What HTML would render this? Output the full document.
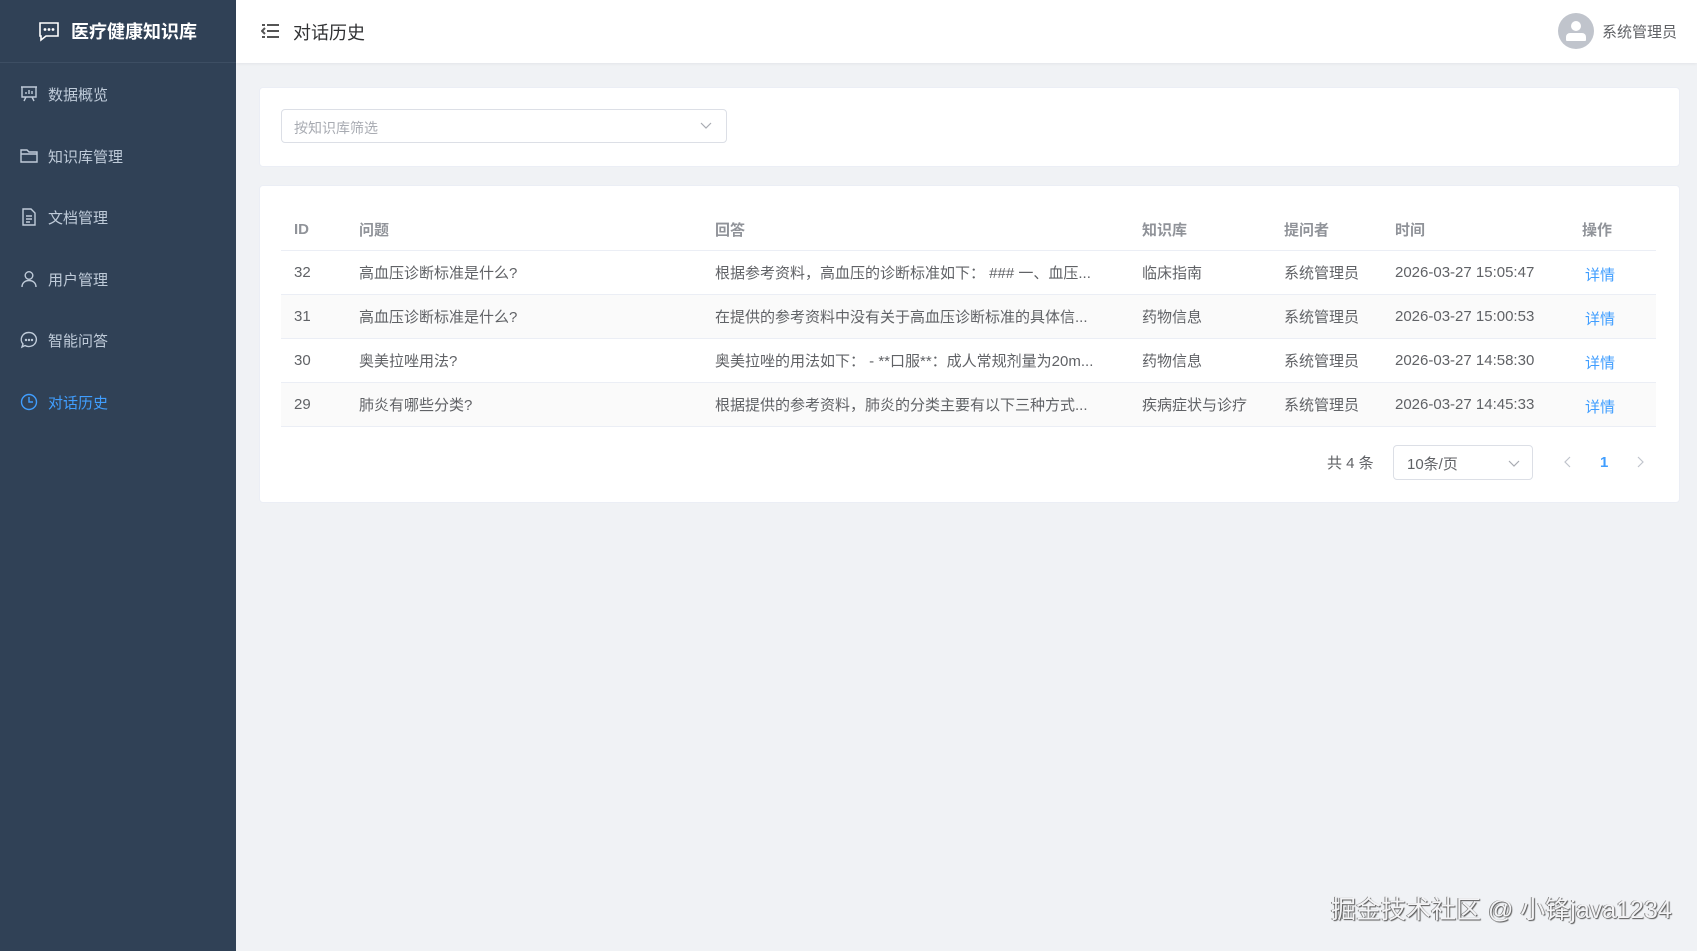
<!DOCTYPE html>
<html><head><meta charset="utf-8">
<style>
*{margin:0;padding:0;box-sizing:border-box}
body{width:1697px;height:951px;overflow:hidden;background:#f0f2f5;font-family:"Liberation Sans","Noto Sans CJK SC",sans-serif;position:relative;color:#606266}
.side{position:absolute;left:0;top:0;width:236px;height:951px;background:#304156}
.logo{height:63px;border-bottom:1px solid #3d4e63;display:flex;align-items:center;padding-left:38px;color:#fff;font-weight:bold;font-size:18px}
.logo svg{margin-right:11px}
.mi{position:absolute;left:0;width:236px;height:56px;display:flex;align-items:center;padding-left:20px;color:#bfcbd9;font-size:15px}
.mi svg{margin-right:10px}
.mi.act{color:#409eff}
.head{position:absolute;left:236px;top:0;right:0;height:63px;background:#fff;box-shadow:0 1px 3px rgba(0,21,41,.06)}
.a{position:absolute;white-space:nowrap}
.card{position:absolute;background:#fff;border:1px solid #ebeef5;border-radius:4px}
.t{position:absolute;font-size:15px;color:#606266;white-space:nowrap}
.n{margin-top:2px}
.th{position:absolute;font-size:15px;color:#909399;font-weight:bold;white-space:nowrap}
.row{position:absolute;left:281px;width:1375px;height:44px;border-bottom:1px solid #ebeef5}
.blue{color:#409eff}
</style></head><body>
<div class="side">
 <div class="logo"><svg width="22" height="22" viewBox="0 0 22 22" fill="none" stroke="#fff" stroke-width="1.6"><path d="M2 3h18v13H8l-5 4v-4H2z"/><circle cx="7" cy="9.5" r=".6" fill="#fff"/><circle cx="11" cy="9.5" r=".6" fill="#fff"/><circle cx="15" cy="9.5" r=".6" fill="#fff"/></svg>医疗健康知识库</div>
</div>
<div class="mi" style="top:66px"><svg width="18" height="18" viewBox="0 0 18 18" fill="none" stroke="#bfcbd9" stroke-width="1.4"><path d="M1 2h16M2 2v10h14V2M6 12l-2 4M12 12l2 4M6 9V7M9 9V5M12 9V6"/></svg>数据概览</div>
<div class="mi" style="top:128px"><svg width="18" height="18" viewBox="0 0 18 18" fill="none" stroke="#bfcbd9" stroke-width="1.4"><path d="M1 3h6l2 2h8v10H1z M1 7h16"/></svg>知识库管理</div>
<div class="mi" style="top:189px"><svg width="18" height="18" viewBox="0 0 18 18" fill="none" stroke="#bfcbd9" stroke-width="1.4"><path d="M3 1h8l4 4v12H3z M6 8h6M6 11h6M6 14h4"/></svg>文档管理</div>
<div class="mi" style="top:251px"><svg width="18" height="18" viewBox="0 0 18 18" fill="none" stroke="#bfcbd9" stroke-width="1.4"><circle cx="9" cy="5.5" r="3.8"/><path d="M2 17c0-4 3-6.5 7-6.5s7 2.5 7 6.5"/></svg>用户管理</div>
<div class="mi" style="top:312px"><svg width="18" height="18" viewBox="0 0 18 18" fill="none" stroke="#bfcbd9" stroke-width="1.4"><path d="M9 1.5a7.5 7 0 1 1-4 13l-3 1.5 1-3A7.5 7 0 0 1 9 1.5z"/><circle cx="6" cy="9" r=".5" fill="#bfcbd9"/><circle cx="9" cy="9" r=".5" fill="#bfcbd9"/><circle cx="12" cy="9" r=".5" fill="#bfcbd9"/></svg>智能问答</div>
<div class="mi act" style="top:374px"><svg width="18" height="18" viewBox="0 0 18 18" fill="none" stroke="#409eff" stroke-width="1.4"><circle cx="9" cy="9" r="7.5"/><path d="M9 4v5h4"/></svg>对话历史</div>

<div class="head">
 <svg class="a" style="left:25px;top:23px" width="18" height="16" viewBox="0 0 18 16" fill="none" stroke="#555" stroke-width="2"><path d="M6 2h12M6 8h12M6 14h12M1 2h3M1 14h3M4 5l-3 3 3 3"/></svg>
 <div class="a" style="left:57px;top:19px;font-size:18px;color:#303133">对话历史</div>
 <div class="a" style="left:1322px;top:13px;width:36px;height:36px;border-radius:50%;background:#c0c4cc;overflow:hidden">
  <div style="position:absolute;left:13px;top:8px;width:10px;height:10px;border-radius:50%;background:#fff"></div>
  <div style="position:absolute;left:8px;top:20px;width:20px;height:8px;border-radius:4px 4px 1px 1px;background:#fff"></div>
 </div>
 <div class="a" style="left:1366px;top:21px;font-size:15px;color:#606266">系统管理员</div>
</div>

<div class="card" style="left:259px;top:87px;width:1421px;height:80px"></div>
<div class="a" style="left:281px;top:109px;width:446px;height:34px;border:1px solid #dcdfe6;border-radius:4px;background:#fff">
 <div class="a" style="left:12px;top:8px;font-size:14px;color:#a8abb2">按知识库筛选</div>
 <svg class="a" style="left:418px;top:12px" width="12" height="8" viewBox="0 0 12 8" fill="none" stroke="#a8abb2" stroke-width="1.2"><path d="M1 1l5 5 5-5"/></svg>
</div>

<div class="card" style="left:259px;top:185px;width:1421px;height:318px"></div>
<div class="row" style="top:207px"></div>
<div class="th n" style="left:294px;top:219px">ID</div>
<div class="th" style="left:359px;top:219px">问题</div>
<div class="th" style="left:715px;top:219px">回答</div>
<div class="th" style="left:1142px;top:219px">知识库</div>
<div class="th" style="left:1284px;top:219px">提问者</div>
<div class="th" style="left:1395px;top:219px">时间</div>
<div class="th" style="left:1582px;top:219px">操作</div>

<div class="row" style="top:251px"></div>
<div class="row" style="top:295px;background:#fafafa"></div>
<div class="row" style="top:339px"></div>
<div class="row" style="top:383px;background:#fafafa"></div>

<div class="t n" style="left:294px;top:262px">32</div>
<div class="t" style="left:359px;top:262px">高血压诊断标准是什么?</div>
<div class="t" style="left:715px;top:262px">根据参考资料，高血压的诊断标准如下： ### 一、血压...</div>
<div class="t" style="left:1142px;top:262px">临床指南</div>
<div class="t" style="left:1284px;top:262px">系统管理员</div>
<div class="t n" style="left:1395px;top:262px">2026-03-27 15:05:47</div>
<div class="t blue" style="left:1585px;top:264px">详情</div>

<div class="t n" style="left:294px;top:306px">31</div>
<div class="t" style="left:359px;top:306px">高血压诊断标准是什么?</div>
<div class="t" style="left:715px;top:306px">在提供的参考资料中没有关于高血压诊断标准的具体信...</div>
<div class="t" style="left:1142px;top:306px">药物信息</div>
<div class="t" style="left:1284px;top:306px">系统管理员</div>
<div class="t n" style="left:1395px;top:306px">2026-03-27 15:00:53</div>
<div class="t blue" style="left:1585px;top:308px">详情</div>

<div class="t n" style="left:294px;top:350px">30</div>
<div class="t" style="left:359px;top:350px">奥美拉唑用法?</div>
<div class="t" style="left:715px;top:350px">奥美拉唑的用法如下： - **口服**：成人常规剂量为20m...</div>
<div class="t" style="left:1142px;top:350px">药物信息</div>
<div class="t" style="left:1284px;top:350px">系统管理员</div>
<div class="t n" style="left:1395px;top:350px">2026-03-27 14:58:30</div>
<div class="t blue" style="left:1585px;top:352px">详情</div>

<div class="t n" style="left:294px;top:394px">29</div>
<div class="t" style="left:359px;top:394px">肺炎有哪些分类?</div>
<div class="t" style="left:715px;top:394px">根据提供的参考资料，肺炎的分类主要有以下三种方式...</div>
<div class="t" style="left:1142px;top:394px">疾病症状与诊疗</div>
<div class="t" style="left:1284px;top:394px">系统管理员</div>
<div class="t n" style="left:1395px;top:394px">2026-03-27 14:45:33</div>
<div class="t blue" style="left:1585px;top:396px">详情</div>

<div class="t" style="left:1327px;top:452px">共 4 条</div>
<div class="a" style="left:1393px;top:445px;width:140px;height:35px;border:1px solid #dcdfe6;border-radius:4px;background:#fff">
 <div class="a" style="left:13px;top:7px;font-size:15px;color:#606266">10条/页</div>
 <svg class="a" style="left:114px;top:14px" width="12" height="8" viewBox="0 0 12 8" fill="none" stroke="#a8abb2" stroke-width="1.2"><path d="M1 1l5 5 5-5"/></svg>
</div>
<svg class="a" style="left:1564px;top:456px" width="8" height="12" viewBox="0 0 8 12" fill="none" stroke="#c0c4cc" stroke-width="1.2"><path d="M6 1L1 6l5 5"/></svg>
<div class="a" style="left:1600px;top:454px;font-size:15px;font-weight:bold;color:#409eff">1</div>
<svg class="a" style="left:1636px;top:456px" width="8" height="12" viewBox="0 0 8 12" fill="none" stroke="#c0c4cc" stroke-width="1.2"><path d="M2 1l5 5-5 5"/></svg>

<div class="a" style="left:1331px;top:890px;font-size:25px;color:#f4f4f6;text-shadow:1px 1px 1px #555,-1px 0 0 #888">掘金技术社区 @ 小锋java1234</div>
</body></html>
